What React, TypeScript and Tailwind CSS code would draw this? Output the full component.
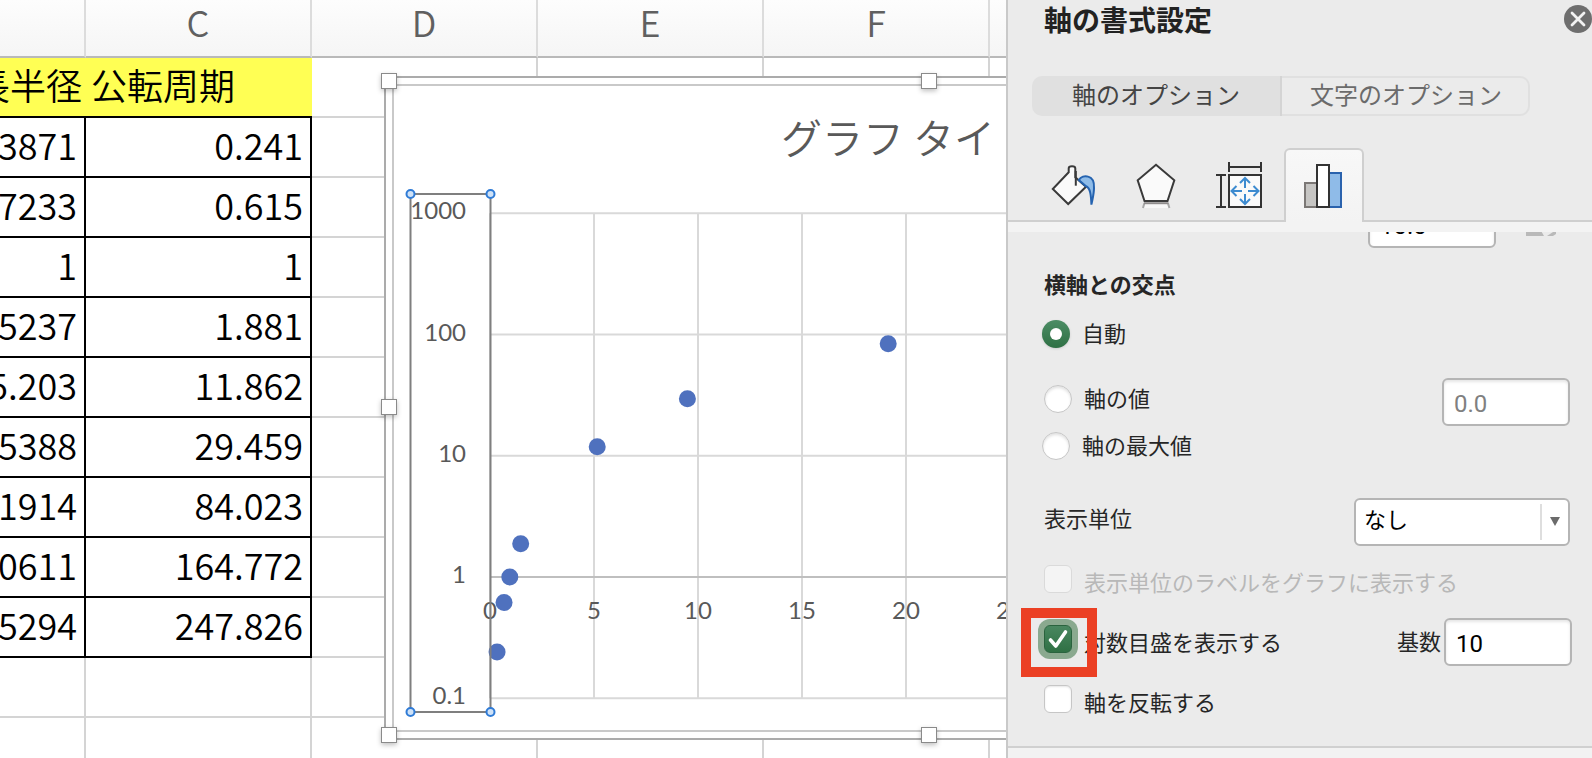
import type { ReactNode } from "react";
import clsx from "clsx";

const planets = [
  { axis: "0.3871", period: "0.241" },
  { axis: "0.7233", period: "0.615" },
  { axis: "1", period: "1" },
  { axis: "1.5237", period: "1.881" },
  { axis: "5.203", period: "11.862" },
  { axis: "9.5388", period: "29.459" },
  { axis: "19.1914", period: "84.023" },
  { axis: "30.0611", period: "164.772" },
  { axis: "39.5294", period: "247.826" },
];

const light = "border-r-2 border-b-2 border-[#d4d4d4]";
const dark = "border-r-2 border-b-2 border-black pt-0 pr-[7px] pb-1.5 pl-0 text-right leading-10";
const heading = "border-b-2 border-black bg-[#ffff54] pt-0 pb-1.5 leading-10";

function EmptyCells({ count }: { count: number }) {
  return (
    <>
      {Array.from({ length: count }, (_, i) => (
        <td key={i} className={light} />
      ))}
    </>
  );
}

function Sheet() {
  return (
    <table className="-ml-[140px] w-[1356px] table-fixed border-separate border-spacing-0 text-4xl font-[350] text-black">
      <thead>
        <tr className="h-[58px] bg-linear-to-b from-[#fdfdfd] to-[#f5f5f5] text-[#606060]">
          {["B", "C", "D", "E", "F", ""].map((col) => (
            <th
              key={col}
              scope="col"
              className="border-r-2 border-b-2 border-r-[#dcdcdc] border-b-[#b9b9b9] p-0 pb-3.5 leading-10 font-[350]"
            >
              {col}
            </th>
          ))}
        </tr>
      </thead>
      <tbody>
        <tr className="h-[60px]">
          <td className={clsx(heading, "pr-1 text-right")}>軌道長半径</td>
          <td className={clsx(heading, "pl-[5px]")}>公転周期</td>
          <EmptyCells count={4} />
        </tr>
        {planets.map((p) => (
          <tr key={p.axis} className="h-[60px]">
            <td className={dark}>{p.axis}</td>
            <td className={dark}>{p.period}</td>
            <EmptyCells count={4} />
          </tr>
        ))}
        <tr className="h-[60px]">
          <EmptyCells count={6} />
        </tr>
        <tr className="h-[60px]">
          <EmptyCells count={6} />
        </tr>
      </tbody>
    </table>
  );
}

// plot scale: linear x, log10 y
const px = (v: number) => 106 + v * 20.8;
const py = (v: number) => 501 - Math.log10(v) * 121.25;

const yTicks = [1000, 100, 10, 1, 0.1];
const xTicks = [0, 5, 10, 15, 20, 25, 30, 35, 40, 45];

function Handle({ className }: { className: string }) {
  return (
    <span
      className={clsx(
        "absolute size-4 border border-[#8a8a8a] bg-white shadow-[0_2px_5px_rgba(0,0,0,0.25)]",
        className,
      )}
    />
  );
}

function Chart() {
  return (
    <figure className="absolute top-[76px] left-[384px] h-[664px] w-[1090px] border-2 border-[#ababab] bg-white">
      <div className="absolute inset-1.5 border-2 border-[#c9c9c9]" />
      <figcaption className="relative pt-7 text-center text-[41px] leading-[60px] font-[350] text-[#595959]">
        グラフ タイトル
      </figcaption>
      <svg className="absolute -top-0.5 -left-0.5 size-full overflow-visible" aria-label="公転周期の散布図">
        <g stroke="#d9d9d9" strokeWidth="2">
          {yTicks.map((t) => (
            <line key={t} x1={px(0)} x2={px(45)} y1={py(t)} y2={py(t)} />
          ))}
          {xTicks.map((t) => (
            <line key={t} x1={px(t)} x2={px(t)} y1={py(1000)} y2={py(0.1)} />
          ))}
          <line x1={px(0)} x2={px(45)} y1={py(1)} y2={py(1)} stroke="#bfbfbf" />
        </g>
        <g fill="#4f71be">
          {planets.map((p) => (
            <circle key={p.axis} cx={px(Number(p.axis)) - 1} cy={py(Number(p.period))} r="8.5" />
          ))}
        </g>
        <g fill="#595959" className="font-[Lato,sans-serif] text-2xl">
          {yTicks.map((t) => (
            <text key={t} x="82" y={py(t) + 6} textAnchor="end">
              {t}
            </text>
          ))}
          {xTicks.map((t) => (
            <text key={t} x={px(t)} y="543" textAnchor="middle">
              {t}
            </text>
          ))}
        </g>
        <rect x="26.5" y="118" width="80" height="518" fill="none" stroke="#7f7f7f" strokeWidth="2" />
        <g fill="#cfe2f7" stroke="#2f7bd6" strokeWidth="2">
          <circle cx="26.5" cy="118" r="4" />
          <circle cx="106.5" cy="118" r="4" />
          <circle cx="26.5" cy="636" r="4" />
          <circle cx="106.5" cy="636" r="4" />
        </g>
      </svg>
      <Handle className="-top-[5px] -left-[5px]" />
      <Handle className="-top-[5px] left-[535px]" />
      <Handle className="top-[321px] -left-[5px]" />
      <Handle className="-bottom-[5px] -left-[5px]" />
      <Handle className="-bottom-[5px] left-[535px]" />
    </figure>
  );
}

function IconTab({ label, active, children }: { label: string; active?: boolean; children: ReactNode }) {
  return (
    <button
      type="button"
      aria-label={label}
      className={clsx(
        "flex h-[74px] w-20 justify-center",
        active
          ? "rounded-t-md border-2 border-b-0 border-[#cfcfcf] bg-linear-to-b from-[#f8f8f8] to-[#f3f3f3] pt-[11px]"
          : "pt-[13px]",
      )}
    >
      <svg width="48" height="48" viewBox="0 0 48 48" fill="none" className="overflow-visible">
        {children}
      </svg>
    </button>
  );
}

function IconTabs() {
  return (
    <div className="mt-8 flex h-[74px] gap-[3px] border-b-2 border-[#cfcfcf] pl-[27px]">
      <IconTab label="塗りつぶしと線">
        <path
          d="M17.7 11.3 1.8 28l15.4 15L35 25.700l-10.700-9.400V7.500c0-3-6.600-3-6.600 0Z"
          fill="#fafafa"
          stroke="#3a3a3a"
          strokeWidth="2"
        />
        <path
          d="M27.8 19c2-3.400 6-4.400 9.400-3.400 4.600 1.200 6.200 5 5.800 11.400 0 6-1.400 10.400-2.600 16.600-.2-5-.3-8-1.200-12-.7-3.400-1.500-5.600-4.500-6.600Z"
          fill="#8fbce8"
          stroke="#2563b0"
          strokeWidth="2"
        />
        <path d="M24.8 10v14.700" stroke="#3a3a3a" strokeWidth="2" />
      </IconTab>
      <IconTab label="効果">
        <path d="M10 41h24l1.700 6H8.600Z" fill="#f7f7f7" />
        <path d="M10.400 42 9 47M33.900 42l1.500 5" stroke="#a8a8a8" strokeWidth="2" />
        <path d="M10 42.200h24.400" stroke="#8f8c8c" strokeWidth="2" />
        <path d="m22 3.700 18.300 15.600L33.500 40h-23L3.700 19.300Z" fill="#fafafa" stroke="#3a3a3a" strokeWidth="2" />
      </IconTab>
      <IconTab label="サイズとプロパティ">
        <path d="M12 14h32v32H12Z" fill="#fafafa" stroke="#333" strokeWidth="2" />
        <path d="M12 1v10M44 1v10M12 6h32M4 14v32M-1 14H9M-1 46H9" stroke="#333" strokeWidth="2" />
        <path
          d="M28 27V17M23 22l5-5 5 5M28 33v10M23 38l5 5 5-5M25 30H14.500M19.500 25l-5 5 5 5M31 30h10.500M36.500 25l5 5-5 5"
          stroke="#3d8bd0"
          strokeWidth="2"
        />
      </IconTab>
      <IconTab label="軸のオプション" active>
        <path d="M5 22h12v24H5Z" fill="#c6c5c3" stroke="#7b7775" strokeWidth="2" />
        <path d="M29 12h12v34H29Z" fill="#8fbbe8" stroke="#2a62ad" strokeWidth="2" />
        <path d="M17 4h12v42H17Z" fill="#fff" stroke="#333" strokeWidth="2" />
      </IconTab>
    </div>
  );
}

const field =
  "h-12 w-32 rounded-md border-2 border-[#b5b5b5] bg-white pt-1 pl-2.5 font-[Roboto,sans-serif] text-2xl shadow-[inset_0_2px_3px_rgba(0,0,0,0.1)]";

function Radio({ children, checked }: { children: ReactNode; checked?: boolean }) {
  return (
    <label className="flex h-7 items-center gap-3">
      <input
        type="radio"
        name="cross"
        defaultChecked={checked}
        className="grid size-7 appearance-none place-items-center rounded-full border border-[#c6c6c6] bg-white shadow-[inset_0_2px_3px_rgba(0,0,0,0.12)] checked:border-0 checked:bg-linear-to-b checked:from-[#4c8d65] checked:to-[#2e7044] checked:shadow-sm checked:before:size-3 checked:before:rounded-full checked:before:bg-white"
      />
      <span className="pb-1">{children}</span>
    </label>
  );
}

function Check({ children, checked, disabled }: { children: ReactNode; checked?: boolean; disabled?: boolean }) {
  return (
    <label className={clsx("flex h-7 items-center gap-3", disabled && "text-[#b8b8b8]")}>
      <span className="relative size-7">
        <input
          type="checkbox"
          defaultChecked={checked}
          disabled={disabled}
          className="block size-7 appearance-none rounded-md border border-[#c6c6c6] bg-white shadow-[inset_0_1px_2px_rgba(0,0,0,0.1)] checked:border-[#2a633e] checked:bg-linear-to-b checked:from-[#498760] checked:to-[#2f7044] checked:shadow-[0_0_0_6px_#8aa98f] disabled:border-[#dadada] disabled:bg-[#f4f4f4] disabled:shadow-none"
        />
        {checked && (
          <>
            <svg viewBox="0 0 28 28" className="pointer-events-none absolute inset-0 size-7" fill="none">
              <path
                d="m6.500 15 5.300 6L21.500 7"
                stroke="#fff"
                strokeWidth="3.6"
                strokeLinecap="round"
                strokeLinejoin="round"
              />
            </svg>
            <span className="pointer-events-none absolute -top-[17px] -left-[23px] z-10 h-[69px] w-[76px] border-10 border-[#eb4024]" />
          </>
        )}
      </span>
      <span className="pt-1">{children}</span>
    </label>
  );
}

function FormatPanel() {
  return (
    <aside className="flex w-[586px] shrink-0 flex-col border-l-2 border-[#c9c9c9] bg-[#ebebeb] text-[22px] leading-8 text-[#262626]">
      <header className="flex h-[38px] items-center justify-between pl-9">
        <h2 className="text-[28px] font-bold text-[#222]">軸の書式設定</h2>
        <button type="button" aria-label="閉じる">
          <svg width="28" height="28" viewBox="0 0 28 28">
            <circle cx="14" cy="14" r="14" fill="#6e6e6e" />
            <path d="m8 8 12 12M20 8 8 20" stroke="#f2f2f2" strokeWidth="2.800" strokeLinecap="round" />
          </svg>
        </button>
      </header>

      <div className="mt-[38px] ml-6 flex h-10 w-[498px] text-2xl">
        <button type="button" className="w-[250px] rounded-l-[10px] border-r-2 border-[#d4d4d4] bg-[#e0e0e0] pb-1 text-[#444]">
          軸のオプション
        </button>
        <button type="button" className="flex-1 rounded-r-[10px] border-2 border-l-0 border-[#e0e0e0] pb-1 pl-0.5 text-[#6b6b6b]">
          文字のオプション
        </button>
      </div>

      <IconTabs />
      <div className="h-2.5 bg-[#f3f3f3]" />

      <div className="overflow-hidden pr-5 pb-2 pl-9">
        <div className="-mt-8 flex h-12 items-center justify-end gap-[30px] pr-4">
          <input aria-label="目盛間隔" defaultValue="10.0" className={clsx(field, "text-black")} />
          <button type="button" aria-label="リセット" disabled>
            <svg width="30" height="24" viewBox="0 0 30 24" fill="#b9b9b9">
              <path d="M0 10h10l8 14H0ZM21 24l9-6v4l-3 2Z" />
            </svg>
          </button>
        </div>
        <h3 className="mt-[19px] font-bold">横軸との交点</h3>
        <div className="mt-[21px] -ml-0.5">
          <Radio checked>自動</Radio>
        </div>
        <div className="mt-[30px] flex h-12 items-center justify-between pr-0.5">
          <div className="pb-1.5">
            <Radio>軸の値</Radio>
          </div>
          <input aria-label="軸の値" defaultValue="0.0" className={clsx(field, "text-[#808080]")} />
        </div>
        <div className="mt-1.5 -ml-0.5">
          <Radio>軸の最大値</Radio>
        </div>
        <div className="mt-[38px] flex h-12 items-center justify-between pr-0.5">
          <label htmlFor="unit" className="pb-2.5">
            表示単位
          </label>
          <div className="relative">
            <select
              id="unit"
              className="block h-12 w-[216px] appearance-none rounded-md border-2 border-[#b5b5b5] bg-white pb-2 pl-2 text-black"
            >
              <option>なし</option>
            </select>
            <svg className="pointer-events-none absolute top-1.5 right-1.5" width="24" height="36" viewBox="0 0 24 36">
              <path d="M1 0v36" stroke="#dedede" strokeWidth="2" />
              <path d="M10 13h10l-5 9Z" fill="#6b6b6b" />
            </svg>
          </div>
        </div>
        <div className="mt-[19px]">
          <Check disabled>表示単位のラベルをグラフに表示する</Check>
        </div>
        <div className="mt-[25px] flex h-12 items-center justify-between">
          <div className="pb-1.5">
            <Check checked>対数目盛を表示する</Check>
          </div>
          <div className="flex items-center gap-[3px]">
            <label htmlFor="base" className="pb-1">
              基数
            </label>
            <input id="base" defaultValue="10" className={clsx(field, "text-black")} />
          </div>
        </div>
        <div className="mt-[19px]">
          <Check>軸を反転する</Check>
        </div>
      </div>
      <div className="mt-[25px] flex-1 border-t-2 border-[#d0d0d0] bg-[#f2f2f2]" />
    </aside>
  );
}

export default function App() {
  return (
    <main className="flex h-screen overflow-hidden bg-white font-['Noto_Sans_CJK_JP',sans-serif]">
      <section className="relative min-w-0 flex-1 overflow-hidden">
        <Sheet />
        <Chart />
      </section>
      <FormatPanel />
    </main>
  );
}
